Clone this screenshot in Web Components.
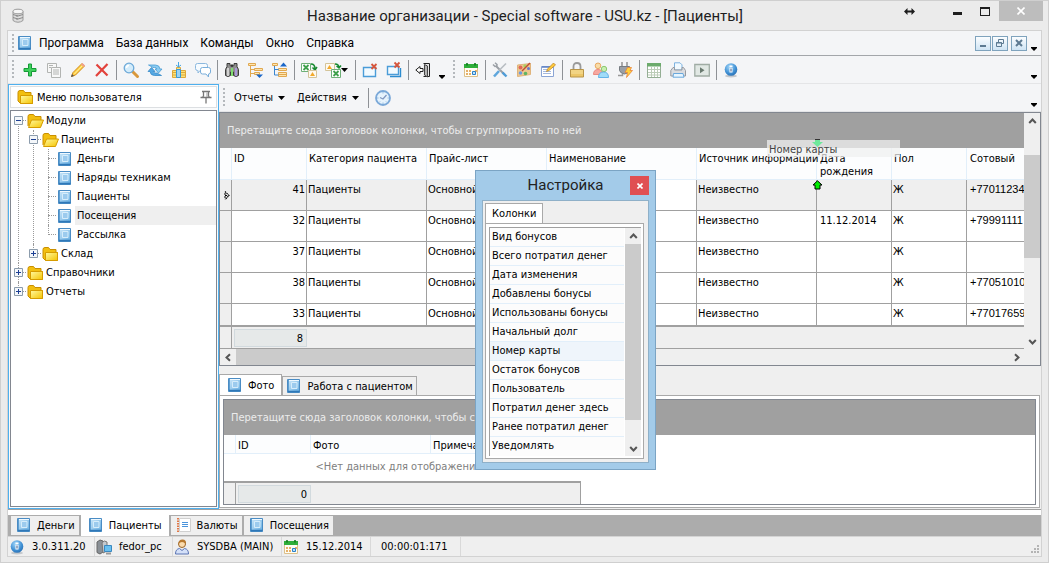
<!DOCTYPE html>
<html lang="ru">
<head>
<meta charset="utf-8">
<title>Название организации - Special software - USU.kz - [Пациенты]</title>
<style>
  body { margin: 0; font: 11px/13px "DejaVu Sans Condensed", "DejaVu Sans", sans-serif; color: #000; }
</style>
</head>
<body>
<app-window></app-window>

<script>
/* ---------- icons ---------- */
const BOOK = `<defs><linearGradient id="b" x1="0" y1="0" x2="1" y2="1"><stop offset="0" stop-color="#d2ebfb"/><stop offset="1" stop-color="#62abe0"/></linearGradient></defs>
<path d="M1.500 1.500h12v13h-12z" fill="url(#b)" stroke="#4a8cc4"/><path d="M2.500 2v12" stroke="#5f9fd2"/><path d="M2 13.500h11.500" stroke="#2f78b8" stroke-width="1.500"/><path d="M5.500 4.500h5.500v6H5.500z" stroke="#d6edfb" fill="#9ccbee"/><path d="M3 2.500h10" stroke="#f0f9ff"/>`;
const FOLDER = `<defs><linearGradient id="f" x1="0" y1="0" x2="1" y2="1"><stop offset="0" stop-color="#fff9a0"/><stop offset="1" stop-color="#f5c400"/></linearGradient></defs>`;
const XLS = `<path d="M0.500 1.500h9v8h-9z" fill="#fff" stroke="#6fb078"/><path d="M2.500 3l5 5M7.500 3l-5 5" stroke="#3fa04c" stroke-width="1.800"/>`;
const CAL = `<path d="M1.500 2.500h13v12h-13z" fill="#fffdf4" stroke="#dcc08a"/><path d="M1 2h14v4H1z" fill="#2fae3a"/><path d="M4 1v2.500M12 1v2.500" stroke="#0f7a1c" stroke-width="1.600"/><g fill="#e6b068"><path d="M3 8h2v2H3zM6 8h2v2H6zM3 11h2v2H3zM6 11h2v2H6zM12 8h2v2h-2z"/></g><path d="M9.500 9.500h3v3h-3z" fill="#bfe2f8" stroke="#2a80c8"/>`;
const ICONS = {
  book: BOOK,
  folder: FOLDER + `<path d="M1 3.500q0-2 2-2h3.500l1.500 2h6v3h1.500v8H3.500L1 12z" fill="#f2bf10" stroke="#c98f00"/><path d="M3.500 6.500h12v8h-12z" fill="url(#f)" stroke="#d69c00"/>`,
  folderopen: FOLDER + `<path d="M1 13V3.500q0-2 2-2h3.500l1.500 2h6V7" fill="#f2bf10" stroke="#c98f00"/><path d="M1.500 14.500L4.500 7h12l-3 7.500z" fill="url(#f)" stroke="#d69c00"/>`,
  db: `<path d="M3 3.500v9q5 3.500 10 0v-9" fill="#dcdcdc" stroke="#9a9a9a"/><ellipse cx="8" cy="3.500" rx="5" ry="2.300" fill="#f6f6f6" stroke="#9a9a9a"/><path d="M3 6.500q5 3 10 0M3 9.500q5 3 10 0M7 7v2M7 10v2" stroke="#8a8a8a" fill="none"/>`,
  plus: `<path d="M6.500 2h3v4.500H14v3H9.500V14h-3V9.500H2v-3h4.500z" fill="#3fd05c" stroke="#159a36"/>`,
  copy: `<g fill="#f8f8f8" stroke="#b2b4b2"><path d="M1.500 1.500h9v9h-9z"/><path d="M5.500 5.500h9v10h-9z"/><path d="M3 3.500h4M3 5.500h2M7 8h6M7 10h6M7 12h6"/></g>`,
  pencil: `<path d="M1.500 14.500l1.500-4L12 1.500l2.500 2.500-9 9z" fill="#ffd24a" stroke="#d08a18"/><path d="M4.500 12l8-8.500" stroke="#fff0a0"/><path d="M11 2.500L12.500 1 15 3.500l-1.500 1.500z" fill="#f0a090"/><path d="M1 15l1-3 2 2z" fill="#555"/>`,
  cross: `<path d="M2.500 2.500l11 11M13.500 2l-11.500 12" stroke="#e2423c" stroke-width="2.200"/>`,
  search: `<path d="M9.500 9.500l5 5" stroke="#d9983c" stroke-width="3" stroke-linecap="round"/><circle cx="6" cy="6" r="4.800" fill="#d3ecfb" stroke="#6da9d8" stroke-width="1.300"/><path d="M3.500 6q0-2.500 2.500-2.500" stroke="#fff" fill="none" stroke-width="1.500"/>`,
  refresh: `<path d="M1.500 3h7q4 0 4.500 4h2l-3.500 4L8 7h2q-.5-1.500-2.500-1.500H6z" fill="#8accf2" stroke="#4a9cd4" stroke-width=".8"/><path d="M14.500 13.500h-7q-4 0-4.500-4H1l3.500-4L8 9.500H6Q6.500 11 8.500 11H10z" fill="#54a8e4" stroke="#3a8cc8" stroke-width=".8"/>`,
  chart: `<path d="M1.500 8.500h4v7h-4zM5.500 5.500h4v10h-4zM9.500 8.500h5v7h-5z" fill="#f9e27c" stroke="#e0a83a"/><path d="M2 10.500h12M2 13h12" stroke="#e0a83a"/><path d="M5.500 7.500h4v8h-4z" fill="#9cd2f4" stroke="#3a9ad8"/><path d="M7.500 0v5M5 3l2.500 2L10 3" stroke="#49a6e0" fill="none"/>`,
  chat: `<path d="M2.500 1.500h8q2 0 2 2v3q0 2-2 2H5l-2 2.500V8.500h-.5q-2 0-2-2v-3q0-2 2-2z" fill="#f6fbff" stroke="#8cb8de"/><path d="M7.500 5.500h6q2 0 2 2V10q0 2-2 2v3l-2.500-3H7.500q-2 0-2-2V7.500q0-2 2-2z" fill="#fff" stroke="#79aedb"/>`,
  binoculars: `<path d="M3 1.500h3v2l2 1 2-1v-2h3v3l1.500 3v6q-2.500 2-5 0V10h-3v3.500q-2.500 2-5 0v-6L3 4.500z" fill="#8e8e8e" stroke="#3c3c3c"/><path d="M4 6v8" stroke="#e8e8e8" stroke-width="1.500"/><path d="M8 6v8" stroke="#7fdc70" stroke-width="2"/><path d="M12 6v8" stroke="#b09ae4" stroke-width="1.800"/><path d="M8 2.500v2" stroke="#333" stroke-width="2"/>`,
  treedown: `<g fill="#ffe6b0" stroke="#e0a850"><path d="M.5 1.500h7v2h-7zM6.500 6.500h8v2h-8zM6.500 10.500h5v2h-5z"/><path d="M2.500 4v11M2.500 7.500h4M2.500 11.500h4" fill="none"/></g><path d="M8 12.500h7l-3.500 3.500z" fill="#1a66c8"/>`,
  treeup: `<path d="M8 4.500h7L11.500.500z" fill="#1a66c8"/><g fill="#ffe6b0" stroke="#e0a850"><path d="M.5 1.500h5v2h-5zM6.500 6.500h8v2h-8zM6.500 10.500h8v4h-8zM7 12.500h7"/></g><path d="M2.500 4v9h4M2.500 7.500h4" fill="none" stroke="#3a86d0"/>`,
  excel: XLS + `<path d="M10 2q4 0 4 5M11.500 5.500L14 8l2-3" fill="none" stroke="#188a30" stroke-width="1.500"/><path d="M7.500 8.500h8v7h-8z" fill="#fffaf0" stroke="#d4c49a"/><path d="M9 14l2.500-4 2.500 4z" fill="#f2a92c"/>`,
  excel2: `<path d="M.5 1.500h9v7h-9z" fill="#fffaf0" stroke="#d4c49a"/><path d="M2 7l2.500-4L7 7z" fill="#f2a92c"/><path d="M10 2q4 0 4 4M11.500 4L14 6l2-2.500" fill="none" stroke="#188a30" stroke-width="1.500"/><g transform="translate(6 6)">${XLS}</g>`,
  winclose: `<path d="M1.500 5.500h12v9h-12z" fill="#f2faff" stroke="#4a9cd8" stroke-width="1.400"/><path d="M9.500 2l5 5M14.500 2l-5 5" stroke="#d6553c" stroke-width="1.800"/>`,
  winclose2: `<path d="M4 14.500h10.500V6" fill="none" stroke="#2c8cd0" stroke-width="1.400"/><path d="M1.500 4.500h11v8h-11z" fill="#f2faff" stroke="#4a9cd8" stroke-width="1.400"/><path d="M8.500 .5l5 5M13.500 .5l-5 5" stroke="#d6553c" stroke-width="1.800"/>`,
  door: `<path d="M8.500 1.500h6v13h-6" fill="#e8e8e8" stroke="#222"/><path d="M9.500 2.500l3 1.500v11L9.500 13z" fill="#b4b4b4" stroke="#444"/><path d="M.8 8L5 4.500v2h3v3H5v2z" fill="#fff" stroke="#222"/>`,
  calendar: CAL,
  tools: `<path d="M4 4l9 9" stroke="#9a9fa5" stroke-width="2"/><path d="M1 2.500l2 2 1.800-.5L5 2.500 3 .800" fill="none" stroke="#9a9fa5" stroke-width="1.500"/><path d="M14 1.500L7.500 8" stroke="#b8bdc2" stroke-width="1.600"/><path d="M7 9l-5 5.500" stroke="#5fa6dc" stroke-width="2.600"/><path d="M10.500 10.500l4 4" stroke="#4f9cd8" stroke-width="2.400"/>`,
  palette: `<path d="M1.500 3l13-1.500v11l-13 2z" fill="#ecc890" stroke="#e0b47c"/><circle cx="4.500" cy="5.500" r="2" fill="#e06858"/><circle cx="9" cy="4" r="1.700" fill="#a8d060"/><circle cx="4.500" cy="11" r="1.800" fill="#6d9ae0"/><circle cx="12.500" cy="6.500" r="1.500" fill="#6a76c8"/><circle cx="9.500" cy="11.500" r="1.800" fill="#60b462"/><path d="M14 1L6 9" stroke="#c04c34" stroke-width="1.400"/>`,
  note: `<path d="M1.500 4.500h12v10h-12z" fill="#fff" stroke="#8aa4d4"/><path d="M3 7.500h5M3 9.500h8M3 11.500h8" stroke="#a4b8de"/><path d="M2 5h11" stroke="#5c80c4" stroke-width="1.500"/><path d="M6.500 9.500l1-2.500L13.500 1l2 2-6.500 5.500z" fill="#ffc93c" stroke="#b8801c" stroke-width=".7"/>`,
  lock: `<path d="M4.500 7.500v-3q0-3.500 3.500-3.500t3.500 3.500v3" fill="none" stroke="#9a9a9a" stroke-width="1.800"/><path d="M1.500 7.500h13v7.500h-13z" fill="#ecc668" stroke="#b89448"/><path d="M2 9h12M2 11h12" stroke="#f8e2a0"/>`,
  people: `<circle cx="5" cy="3.800" r="2.800" fill="#f8dca8" stroke="#e8a860"/><path d="M.5 12.500q0-5 4.500-5t4.500 5z" fill="#f7a8a0" stroke="#ec8a80"/><circle cx="11" cy="7" r="2.700" fill="#c8efb0" stroke="#8cc870"/><path d="M5.500 15.500q0-5.500 5-5.500t5 5.500z" fill="#a0dcf8" stroke="#64b4e8"/>`,
  plug: `<path d="M5 0v5M10 0v5" stroke="#999" stroke-width="1.600"/><path d="M2.500 4.500h10v4q-1 3-5 3.500-4-.5-5-3.500z" fill="#9a9fa6" stroke="#767c82"/><path d="M5.500 12v1.500H1" stroke="#999" stroke-width="1.500" fill="none"/><path d="M10.500 5.500h4l-1.500 3h2.500L9.500 15.500l1-5H8z" fill="#ffd23c" stroke="#e8843c" stroke-width=".8"/>`,
  sheet: `<path d="M1.500 1.500h13v14h-13z" fill="#fff" stroke="#94ae94"/><path d="M1 1h14v3.500H1z" fill="#6cab6c"/><path d="M2 7.500h12M2 10.500h12M2 13h12M5.500 5v10M8.500 5v10M11.500 5v10" stroke="#bccdb8"/>`,
  printer: `<path d="M4.500 .8h5.500l2 2V8h-7.500z" fill="#f2faff" stroke="#7cb2e0"/><path d="M.8 8.500L3 5.500h1.500V8h7.500V5.500h1.500l2 3v5.500H.8z" fill="#dadce0" stroke="#969aa0"/><path d="M3.500 11.500h9.500l1 3.700h-11z" fill="#e6f5ff" stroke="#6aa8dc"/>`,
  play: `<path d="M.8 2.500h14.500v11.500H.8z" fill="#e1e8e4" stroke="#a0aca4" stroke-width="1.300"/><path d="M6 5.200l4.500 3-4.500 3z" fill="#6a7a70"/>`,
  info: `<defs><radialGradient id="g" cx=".4" cy=".3" r=".8"><stop offset="0" stop-color="#a4d8fa"/><stop offset=".6" stop-color="#4090d4"/><stop offset="1" stop-color="#2468ac"/></radialGradient></defs><ellipse cx="8" cy="14" rx="6" ry="1.500" fill="#c4c8cc"/><circle cx="8" cy="7.500" r="6.300" fill="url(#g)"/><path d="M6.500 6h3v4.500h-3zM6.500 3.500h3v1.800h-3z" fill="#fff"/><path d="M8 6.500v3" stroke="#358" />`,
  clock: `<circle cx="8" cy="8" r="7" fill="#e6f3fd" stroke="#7aa8d8" stroke-width="1.800"/><path d="M5 7.500L8 9l3.500-4" fill="none" stroke="#8098c0" stroke-width="1.300"/><path d="M8 2v1.500M8 12.500V14M2 8h1.500M12.500 8H14M4 12.500l1-1M12 12.500l-1-1" stroke="#90b8e0"/>`,
  pin: `<path d="M4 2.500h8M5.500 3v4.500M10.500 3v4.500M2.500 8.500h11M5.500 7.500L3.500 8.500M10.500 7.500l2 1M8 9v5.500" stroke="#777" fill="none" stroke-width="1.300"/><path d="M9 3.500v4.500" stroke="#999"/>`,
  notebook: `<path d="M3.500 1.500h11v13h-11z" fill="#fff" stroke="#d0d0d0"/><path d="M2 1v14" stroke="#e07848" stroke-width="2" stroke-dasharray="1.500 1"/><path d="M6 5.500h6M6 7.500h6M6 9.500h6" stroke="#4a94dc" stroke-width="1.200"/>`,
  server: `<path d="M1 3l3-2 3 1v11l-3 2-3-1.500z" fill="#8a9096" stroke="#666"/><path d="M6 3.500l2.500-1.500L11 3v9l-4 2z" fill="#c4c9ce" stroke="#777"/><path d="M8.500 6.500h7v6h-7z" fill="#68c0f0" stroke="#3a88c0"/><path d="M10 14.500h5" stroke="#999" stroke-width="2"/>`,
  user: `<circle cx="8" cy="5" r="3.500" fill="#fbdcae" stroke="#9a6428"/><path d="M4.500 5q0-4.500 4-4.500t3.500 4.500q-2-2-4-2t-3.500 2z" fill="#b87a30"/><path d="M1.500 15q0-5 4-5.500L8 11.500l2.500-2q4 .5 4 5.500z" fill="#d4e0f8" stroke="#5a74b4"/>`
};

/* Base class: every element clones its template into an open shadow root. */
class UiElement extends HTMLElement {
  constructor() {
    super();
    const t = document.createElement('template');
    t.innerHTML = '<style>*{box-sizing:border-box}button{font:inherit;color:inherit;background:none;border:0;padding:0;margin:0}[hidden]{display:none}</style>' + this.view();
    this.attachShadow({ mode: 'open' }).append(t.content.cloneNode(true));
  }
  view() { return ''; }
}

class UiIcon extends UiElement {
  view() {
    return `<style>:host{display:block;flex:none;width:16px;height:16px}svg{display:block;width:100%;height:100%;overflow:visible}</style>
      <svg viewBox="0 0 16 16" fill="none" aria-hidden="true">${ICONS[this.getAttribute('name')] || ''}</svg>`;
  }
}

class UiGrip extends UiElement {
  view() { return `<style>:host{display:block;flex:none;width:10px;height:19px}i{display:block;width:2px;height:100%;margin-left:4px;background:repeating-linear-gradient(#b4b8bc 0 2px,transparent 2px 4px)}</style><i></i>`; }
}

class UiSeparator extends UiElement {
  view() { return `<style>:host{display:block;flex:none;width:1px;height:20px;margin:0 2px;background:#8e9196}</style>`; }
}

class UiOverflow extends UiElement {
  view() {
    return `<style>:host{display:flex;flex:none;align-self:flex-end;width:14px;height:12px}button{display:block;width:100%}svg{display:block;margin:0 auto}</style>
      <button aria-label="Параметры панели"><svg width="6" height="4"><path d="M0 0h6v1L3 4 0 1z"/></svg></button>`;
  }
}

class ToolButton extends UiElement {
  view() {
    const label = this.getAttribute('label') || '';
    const icon = this.getAttribute('icon');
    return `<style>:host{display:block;flex:none}
      button{display:flex;align-items:center;justify-content:center;min-width:24px;height:22px;white-space:nowrap}
      .wide{padding:0 5px 0 4px}.labelled{padding:0 7px 0 0}
      .text{padding:0 5px 0 5px}svg{flex:none}button:hover{background:#dceefb}</style>
      <button class="${icon ? (this.hasAttribute('menu') ? 'wide' : '') : 'labelled'}" title="${label}"${icon ? ` aria-label="${label || icon}"` : ''}>${icon ? `<ui-icon name="${icon}"></ui-icon>` : `<span class="text">${label}</span>`}
      ${this.hasAttribute('menu') ? '<svg width="7" height="4"><path d="M0 0h7L3.500 4z" fill="#000"/></svg>' : ''}</button>`;
  }
}

class ToolBar extends UiElement {
  view() {
    return `<style>:host{display:flex;flex:none;align-items:center;height:28px;background:#f4f5f7;border-bottom:1px solid #e4e5e7}
      .fill{flex:1}</style>
      <ui-grip></ui-grip><slot></slot><span class="fill"></span><ui-overflow></ui-overflow>`;
  }
}

class TitleBar extends UiElement {
  view() {
    return `<style>:host{display:grid;grid-template-columns:1fr auto 1fr;flex:none;height:29px;color:#1e1e1e}
      ui-icon{margin:7px 0 0 3px}
      h1{margin:0;font:15px/30px Roboto,"Noto Sans",sans-serif;white-space:nowrap}
      .caption{display:flex;justify-content:flex-end;align-items:flex-start}
      button{width:28px;height:20px;display:grid;place-items:center}
      .size{margin-right:20px}.close{width:44px;background:#bdbdbd}</style>
      <ui-icon name="db"></ui-icon><h1><slot></slot></h1>
      <div class="caption">
        <button class="size" aria-label="Ширина"><svg width="11" height="7"><path d="M0 3.500L3.500 0v2.500h4V0L11 3.500 7.500 7V4.500h-4V7z" fill="#1e1e1e"/></svg></button>
        <button aria-label="Свернуть"><svg width="9" height="8"><path d="M0 5h9v3H0z" fill="#1e1e1e"/></svg></button>
        <button aria-label="Развернуть"><svg width="10" height="9"><path d="M0 0h10v9H0zM1 2v6h8V2z" fill="#1e1e1e" fill-rule="evenodd"/></svg></button>
        <button class="close" aria-label="Закрыть"><svg width="8" height="8"><path d="M.5 .5l7 7M7.500 .5l-7 7" stroke="#fff" stroke-width="1.600"/></svg></button>
      </div>`;
  }
}

class MenuBar extends UiElement {
  view() {
    const items = ['Программа', 'База данных', 'Команды', 'Окно', 'Справка'];
    return `<style>:host{display:flex;flex:none;align-items:center;height:25px;background:#f4f5f7;border-bottom:1px solid #a3a6aa}
      ui-icon{margin-left:-1px}
      nav{display:flex;flex:1}nav button{padding:0 6px;height:20px;font:12px/20px Roboto,"Noto Sans",sans-serif}
      .mdi{display:flex;gap:1px}.mdi button{width:16px;height:15px;display:grid;place-items:center;border:1px solid #7fa3bd;background:linear-gradient(#fbfdff,#cfe4f4)}
      .mdi button:last-child{margin-left:2px}</style>
      <ui-grip></ui-grip><ui-icon name="book"></ui-icon>
      <nav>${items.map(i => `<button>${i}</button>`).join('')}</nav>
      <div class="mdi">
        <button aria-label="Свернуть окно"><svg width="8" height="8"><path d="M1 6h6v2H1z" fill="#5d7a92"/></svg></button>
        <button aria-label="Восстановить окно"><svg width="8" height="8" fill="none" stroke="#5d7a92"><path d="M2.500 3V.500h5v4H6M.500 3.500h5v4h-5z"/><path d="M0 4h6" /></svg></button>
        <button aria-label="Закрыть окно"><svg width="8" height="8"><path d="M1 1l6 6M7 1L1 7" stroke="#5d7a92" stroke-width="2"/></svg></button>
      </div><ui-overflow></ui-overflow>`;
  }
}

class TreeNode extends UiElement {
  view() {
    const a = n => this.getAttribute(n);
    const kids = this.children.length > 0 || this.hasAttribute('closed');
    const sign = this.hasAttribute('closed') ? 'M2 4.500h5M4.500 2v5' : 'M2 4.500h5';
    return `<style>:host{display:block;position:relative}
      :host::before{content:"";position:absolute;left:4px;top:0;bottom:0;border-left:1px dotted #9a9a9a}
      :host([last])::before{bottom:auto;height:10px}:host([root])::before{top:10px}
      .row{display:flex;align-items:center;height:19px;position:relative}
      .box{display:block;flex:none;width:9px;height:9px}
      .gap{flex:none;width:8px;height:1px;border-bottom:1px dotted #9a9a9a;margin:0 1px 0 4px}
      .dots{flex:none;width:3px;margin:0 1px 0 0;border-bottom:1px dotted #9a9a9a}
      ui-icon{margin-right:2px}
      a{flex:1;color:inherit;text-decoration:none;line-height:19px;padding-left:1px}
      .leaf a{padding-left:2px}
      :host([selected]) a{background:#efefef}
      .kids{display:block;margin-left:15px}</style>
      <div class="row ${kids ? '' : 'leaf'}">
        ${kids ? `<button class="box" aria-label="Раскрыть"><svg width="9" height="9" style="display:block"><path d="M.5 .5h8v8h-8z" fill="#f4f7fa" stroke="#8c9cac"/><path d="${sign}" stroke="#1c3f94"/></svg></button><span class="dots"></span>` : '<span class="gap"></span>'}
        <ui-icon name="${a('icon')}"></ui-icon><a href="#${a('label')}">${a('label')}</a>
      </div><div class="kids"><slot></slot></div>`;
  }
}

class NavPanel extends UiElement {
  view() {
    return `<style>:host{display:flex;flex-direction:column;flex:none;width:211px;border:1px solid #4fb0ee;padding:1px;background:#fafbfc}
      header{display:flex;align-items:center;height:22px;flex:none;border:1px solid #dcdfe2;background:#fff;margin-bottom:2px;padding:0 2px 0 6px}
      h2{flex:1;margin:0 0 0 4px;font:inherit}
      .tree{flex:1;min-height:0;overflow:hidden;border:1px solid #828790;background:#fff;padding:0 0 0 3px}</style>
      <header><ui-icon name="folder"></ui-icon><h2>Меню пользователя</h2><button aria-label="Закрепить"><ui-icon name="pin"></ui-icon></button></header>
      <nav class="tree"><slot></slot></nav>`;
  }
}

class ScrollBar extends UiElement {
  view() {
    const v = this.hasAttribute('vertical');
    const [s, t, e] = (this.getAttribute('track') || '0 1 1').split(' ');
    const d = v ? ['M1.200 6L4.500 2.500 7.800 6', 'M1.200 3L4.500 6.500 7.800 3'] : ['M6 1.200L2.500 4.500 6 7.800', 'M3 1.200L6.500 4.500 3 7.800'];
    const b = (p, l) => `<button aria-label="${l}"><svg width="9" height="9"><path d="${p}" fill="none" stroke="#555" stroke-width="2"/></svg></button>`;
    return `<style>:host{display:flex;flex:none;flex-direction:${v ? 'column' : 'row'};${v ? 'width' : 'height'}:16px;background:#efefef}
      :host([corner]){padding-right:16px}
      button{flex:none;width:16px;height:16px;display:grid;place-items:center}.thumb{background:#cbcbcb}</style>
      ${b(d[0], 'Назад')}<span style="flex:${s}"></span><span class="thumb" style="flex:${t}"></span><span style="flex:${e}"></span>${b(d[1], 'Вперёд')}`;
  }
}

/* Table with group panel, header, rows and a summary footer. */
class DataGrid extends UiElement {
  view() {
    return `<style>:host{display:flex;flex-direction:column;min-height:0;min-width:0;position:relative;border:1px solid #828790;background:#fff}
      .main{display:flex;flex:1;min-height:0}.pane{flex:1;min-width:0;display:flex;flex-direction:column}
      .group{flex:none;height:35px;line-height:36px;background:#a0a0a0;color:#ececec;padding:0 7px;white-space:nowrap;overflow:hidden}
      .viewport{flex:1;min-height:0;overflow:hidden}
      table{table-layout:fixed;border-collapse:separate;border-spacing:0}
      th{font:inherit;text-align:left;vertical-align:top;white-space:nowrap;height:var(--head,32px);padding:4px 0 0 2px;background:#fcfdfe;border-right:1px solid #e2effa;border-bottom:1px solid #e2effa}
      td{height:31px;vertical-align:top;padding:3px 0 0 1px;border-right:1px solid #a0a0a0;border-bottom:1px solid #a0a0a0;overflow:hidden;white-space:nowrap}
      td.num{text-align:right;padding-right:1px}th.pad,td.pad{padding-left:3px}
      td.phone{font-family:"Liberation Sans",sans-serif}
      td.mark{background:#efefef;vertical-align:middle;padding:0}.mark svg{display:block;margin:0 0 0 4px}
      tr.current td{background:#efefef}tr.current td.focus{background:#fff}
      td.none{height:25px;border:0;vertical-align:middle;text-align:center;padding:0;color:#808080}
      .foot{flex:none;display:flex;height:24px;border-top:2px solid #a0a0a0;border-bottom:1px solid #a0a0a0;background:#efefef}
      .foot i{flex:none;width:12px;border-right:1px solid #a0a0a0}
      .foot output{flex:none;width:73px;margin:2px 0 1px 2px;padding:0 3px;line-height:17px;text-align:right;background:#e6e9e9;border:1px solid #d2dade}
      :host([compact]) .foot{width:357px;border-right:1px solid #a0a0a0;border-bottom:0;height:23px}</style>
      <div class="main"><div class="pane"><div class="group">Перетащите сюда заголовок колонки, чтобы сгруппировать по ней</div>
      <div class="viewport"><table><colgroup></colgroup><thead><tr></tr></thead><tbody></tbody></table></div>
      <div class="foot"><i></i><output></output></div></div><slot name="vertical"></slot></div>
      <slot name="horizontal"></slot><slot></slot>`;
  }
  set data({ columns, rows, empty, focus }) {
    const $ = s => this.shadowRoot.querySelector(s);
    $('table').style.width = columns.reduce((n, c) => n + c.width, 12) + 'px';
    $('colgroup').innerHTML = '<col style="width:12px">' + columns.map(c => `<col style="width:${c.width}px">`).join('');
    $('thead tr').innerHTML = '<th></th>' + columns.map(c => `<th scope="col" class="${c.kind || ''}">${c.title}</th>`).join('');
    const mark = '<svg width="6" height="9" fill="none" stroke="#000" stroke-width="1.200"><path d="M1 .500L5 4.500 1 8.500" stroke-dasharray="1.500 .700"/><path d="M0 3h2M0 6h2M1 4.500h2"/></svg>';
    $('tbody').innerHTML = rows.length
      ? rows.map((r, i) => `<tr class="${i ? '' : 'current'}"><td class="mark">${i ? '' : mark}</td>${columns.map((c, j) => `<td class="${c.kind || ''} ${j === focus ? 'focus' : ''}">${r[j]}</td>`).join('')}</tr>`).join('')
      : `<tr><td class="none" colspan="${columns.length + 1}">${empty}</td></tr>`;
    $('output').textContent = this.getAttribute('total');
  }
}

class DragHint extends UiElement {
  view() {
    return `<style>:host{position:absolute;left:547px;top:27px;width:133px;height:17px;background:rgba(240,240,240,.75);color:#444;line-height:20px}
      span{padding-left:2px}svg{position:absolute;left:45px}.up{top:40px}.down{top:-1px}</style><span>Номер карты</span>
      <svg class="down" width="11" height="8"><path d="M3 0h5v3h3L5.500 8 0 3h3z" fill="#6fe89c"/><path d="M3 .5h5" stroke="#333"/></svg>
      <svg class="up" width="11" height="10"><path d="M5.500 .800L10 5H8v4H3V5H1z" fill="#0e0" stroke="#000"/></svg>`;
  }
}

class TabButton extends UiElement {
  view() {
    return `<style>:host{display:block;flex:none}
      button{display:flex;align-items:center;gap:5px;height:19px;padding:0 4px 0 5px;background:#efefef;white-space:nowrap}
      :host([framed]) button{border:1px solid #a9a9a9;border-bottom:0;padding:0 3px}
      :host([active]) button{height:21px;padding:0 7px;background:#fff}</style>
      <button role="tab" aria-selected="${this.hasAttribute('active')}"><ui-icon name="${this.getAttribute('icon')}"></ui-icon><span><slot></slot></span></button>`;
  }
}

class TabStrip extends UiElement {
  view() { return `<style>:host{display:flex;flex:none;align-items:flex-end}</style><slot></slot>`; }
}

class SettingsDialog extends UiElement {
  view() {
    const items = ['Вид бонусов', 'Всего потратил денег', 'Дата изменения', 'Добавлены бонусы', 'Использованы бонусы', 'Начальный долг', 'Номер карты', 'Остаток бонусов', 'Пользователь', 'Потратил денег здесь', 'Ранее потратил денег', 'Уведомлять'];
    return `<style>:host{position:absolute;left:474px;top:169px;width:181px;box-sizing:border-box;border:1px solid #7ba4c4;background:#a3cbe9;padding:0 6px 6px;z-index:2}
      header{display:grid;grid-template-columns:1fr auto 1fr;height:29px;justify-items:end;align-items:center}
      h2{grid-column:2;margin:0;font:15px/29px Roboto,"Noto Sans",sans-serif;color:#222}
      .close{width:19px;height:19px;display:grid;place-items:center;background:#e04f52}
      .body{border:1px solid #8fb0c8;background:#efefef;padding:2px 4px 3px 2px}
      .tab{display:block;height:20px;padding:0 6px;background:#fff;border:1px solid #a9a9a9;border-bottom:0}
      .page{border:1px solid #a9a9a9;background:#fff;padding:3px 2px 2px 3px}
      .list{display:flex;border:solid #a0a0a0;border-width:1px 0 0 1px}
      ul{flex:1;list-style:none;margin:0;padding:0 1px 0 0}
      li{height:19px;border-bottom:1px solid #e2effa;background:#fcfcfc}li:last-child{border-bottom-color:#fcfcfc}
      li button{display:block;width:100%;height:18px;padding:0 2px;line-height:18px;text-align:left;white-space:nowrap}
      li.sel{background:#eff5fb}</style>
      <header><h2>Настройка</h2><button class="close" aria-label="Закрыть"><svg width="6" height="6"><path d="M.5 .5l5 5M5.500 .5l-5 5" stroke="#fff" stroke-width="1.600"/></svg></button></header>
      <div class="body"><button class="tab" role="tab">Колонки</button>
      <div class="page"><div class="list"><ul>${items.map(i => `<li class="${i === 'Номер карты' ? 'sel' : ''}"><button>${i}</button></li>`).join('')}</ul>
      <scroll-bar vertical track="0 9 1"></scroll-bar></div></div></div>`;
  }
}

class StatusBar extends UiElement {
  view() {
    const items = [['info', '3.0.311.20', 87], ['server', 'fedor_pc', 78], ['user', 'SYSDBA (MAIN)', 109], ['calendar', '15.12.2014', 89], ['', '00:00:01:171', 90]];
    return `<style>:host{display:flex;flex:none;height:20px;box-sizing:border-box;border-top:1px solid #d4d4d4;background:#efefef;align-items:center}
      span{display:flex;align-items:center;gap:7px;height:19px;padding-left:1px;border-right:1px solid #d9d9d9;white-space:nowrap}
      .plain{padding-left:10px}svg{margin:auto 2px 2px auto}</style>
      ${items.map(([i, t, w]) => `<span class="${i ? '' : 'plain'}" style="min-width:${w}px">${i ? `<ui-icon name="${i}"></ui-icon>` : ''}${t}</span>`).join('')}
      <svg width="9" height="9" fill="#b4b4b4"><path d="M7 0h2v2H7zM7 3h2v2H7zM7 6h2v2H7zM4 3h2v2H4zM4 6h2v2H4zM1 6h2v2H1z"/></svg>`;
  }
}

class AppWindow extends UiElement {
  view() {
    const T = i => i.split(' ').map(n => n === '|' ? '<ui-separator></ui-separator>' : `<tool-button icon="${n}"></tool-button>`).join('');
    const leaf = (l, x = '') => `<tree-node label="${l}" icon="book" ${x}></tree-node>`;
    return `<style>:host{display:flex;flex-direction:column;height:100vh;min-height:400px;position:relative;overflow:hidden;border:1px solid #cfcfcf;padding:0 6px 5px;background:#ebebeb;box-sizing:border-box}
      title-bar{margin-right:-1px}
      .client{flex:1;min-height:0;display:flex;flex-direction:column;border:1px solid #d2d2d2}
      .work{flex:1;min-height:0;display:flex}
      .right{flex:1;min-width:0;display:flex;flex-direction:column;background:#efefef}
      .top{flex:1}.pages{margin-top:8px}
      .page{flex:none;border:1px solid #a9a9a9;background:#fff;padding:3px 3px 2px;margin:0 1px 1px 0}
      .detail{height:106px;box-sizing:border-box;--head:19px}
      .mdi{flex:none;height:27px;box-sizing:border-box;border-top:1px solid #a0a0a0;background:linear-gradient(#fff 5px,#acacac 5px)}
      .windows{height:26px;box-sizing:border-box;padding:4px 0 0 3px;gap:2px;align-items:center}</style>
      <title-bar>Название организации - Special software - USU.kz - [Пациенты]</title-bar>
      <div class="client">
        <menu-bar></menu-bar>
        <tool-bar>${T('plus copy pencil cross | search refresh chart chat | binoculars treedown treeup | excel')}<tool-button icon="excel2" menu></tool-button>${T('| winclose winclose2 | door')}<ui-overflow></ui-overflow><ui-grip></ui-grip>${T('calendar | tools palette note | lock people plug | sheet printer play | info')}</tool-bar>
        <div class="work">
          <nav-panel>
            <tree-node label="Модули" icon="folderopen" root>
              <tree-node label="Пациенты" icon="folderopen">
                ${leaf('Деньги')}${leaf('Наряды техникам')}${leaf('Пациенты')}${leaf('Посещения', 'selected')}${leaf('Рассылка', 'last')}
              </tree-node>
              <tree-node label="Склад" icon="folder" closed last></tree-node>
            </tree-node>
            <tree-node label="Справочники" icon="folder" closed></tree-node>
            <tree-node label="Отчеты" icon="folder" closed last></tree-node>
          </nav-panel>
          <div class="right">
            <tool-bar><tool-button label="Отчеты" menu></tool-button><tool-button label="Действия" menu></tool-button><ui-separator></ui-separator><tool-button icon="clock"></tool-button></tool-bar>
            <data-grid class="top" total="8">
              <scroll-bar slot="vertical" vertical track="26 102 74"></scroll-bar>
              <scroll-bar slot="horizontal" corner track="0 35 65"></scroll-bar>
              <drag-hint></drag-hint>
            </data-grid>
            <tab-strip class="pages"><tab-button icon="book" framed active>Фото</tab-button><tab-button icon="book" framed>Работа с пациентом</tab-button></tab-strip>
            <div class="page"><data-grid class="detail" compact total="0"></data-grid></div>
          </div>
        </div>
        <div class="mdi"><tab-strip class="windows"><tab-button icon="book">Деньги</tab-button><tab-button icon="book" active>Пациенты</tab-button><tab-button icon="notebook">Валюты</tab-button><tab-button icon="book">Посещения</tab-button></tab-strip></div>
        <status-bar></status-bar>
      </div>
      <settings-dialog></settings-dialog>`;
  }
  connectedCallback() {
    const row = (id, date, phone) => [id, 'Пациенты', 'Основной', '', 'Неизвестно', date, 'Ж', phone];
    this.shadowRoot.querySelector('.top').data = {
      focus: 3,
      columns: [
        { title: 'ID', width: 75, kind: 'num' }, { title: 'Категория пациента', width: 120 }, { title: 'Прайс-лист', width: 120 },
        { title: 'Наименование', width: 150 }, { title: 'Источник информации', width: 120 }, { title: 'Дата<br>рождения', width: 75, kind: 'pad' },
        { title: 'Пол', width: 75 }, { title: 'Сотовый', width: 90, kind: 'pad phone' }
      ],
      rows: [row(41, '', '+77011234'), row(32, '11.12.2014', '+79991111'), row(37, '', ''), row(38, '', '+77051010'), row(33, '', '+77017659')]
    };
    this.shadowRoot.querySelector('.detail').data = {
      columns: [{ title: 'ID', width: 75 }, { title: 'Фото', width: 120 }, { title: 'Примечание', width: 150 }],
      rows: [], empty: '&lt;Нет данных для отображения&gt;'
    };
  }
}

/* Children are counted in the constructor, so nested elements are defined before
   the window, which upgrades its whole template at once. */
Object.entries({
  'ui-icon': UiIcon, 'ui-grip': UiGrip, 'ui-separator': UiSeparator, 'ui-overflow': UiOverflow, 'tool-button': ToolButton,
  'tool-bar': ToolBar, 'title-bar': TitleBar, 'menu-bar': MenuBar, 'tree-node': TreeNode, 'nav-panel': NavPanel,
  'scroll-bar': ScrollBar, 'data-grid': DataGrid, 'drag-hint': DragHint, 'tab-button': TabButton, 'tab-strip': TabStrip,
  'settings-dialog': SettingsDialog, 'status-bar': StatusBar, 'app-window': AppWindow
}).forEach(([name, cls]) => customElements.define(name, cls));
</script>
</body>
</html>
